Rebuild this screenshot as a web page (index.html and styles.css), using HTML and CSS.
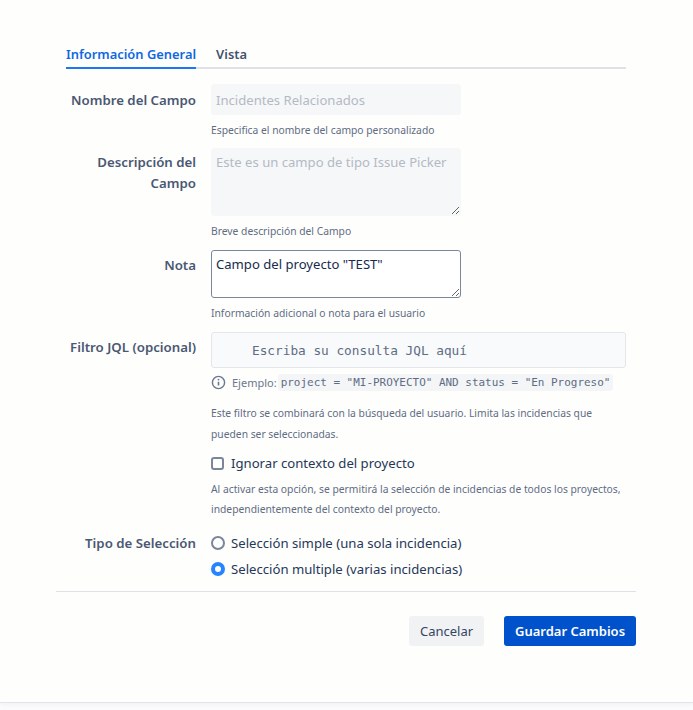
FILE: index.html
```html
<!DOCTYPE html>
<html lang="es">
<head>
<meta charset="utf-8">
<title>Campo</title>
<link rel="stylesheet" href="styles.css">
</head>
<body>
<main class="panel">
  <div class="body">
    <nav class="tabs">
      <a class="tab active">Información General</a>
      <a class="tab">Vista</a>
    </nav>
    <form class="form">
      <div class="row row-name">
        <label class="label">Nombre del Campo</label>
        <div class="field">
          <input class="input disabled" placeholder="Incidentes Relacionados" disabled>
          <p class="help help-first">Especifica el nombre del campo personalizado</p>
        </div>
      </div>
      <div class="row row-desc">
        <label class="label">Descripción del Campo</label>
        <div class="field">
          <textarea class="area area-desc disabled" placeholder="Este es un campo de tipo Issue Picker"></textarea>
          <p class="help help-first">Breve descripción del Campo</p>
        </div>
      </div>
      <div class="row row-note">
        <label class="label">Nota</label>
        <div class="field">
          <textarea class="area area-note">Campo del proyecto "TEST"</textarea>
          <p class="help help-first">Información adicional o nota para el usuario</p>
        </div>
      </div>
      <div class="row row-jql">
        <label class="label">Filtro JQL (opcional)</label>
        <div class="field field-wide">
          <div class="jql">Escriba su consulta JQL aquí</div>
          <div class="example">
            <svg class="info" width="16" height="16" viewBox="0 0 16 16" fill="none" stroke="#6b778c">
              <circle cx="8" cy="8" r="6.5" stroke-width="1.5"/>
              <path d="M8 7.2v4" stroke-width="1.7"/>
              <circle cx="8" cy="4.9" r="1" fill="#6b778c" stroke="none"/>
            </svg>
            <span class="example-text">Ejemplo:</span>
            <code class="code">project = "MI-PROYECTO" AND status = "En Progreso"</code>
          </div>
          <p class="help help-long help-jql">Este filtro se combinará con la búsqueda del usuario. Limita las incidencias que pueden ser seleccionadas.</p>
          <label class="check">
            <span class="box"></span>
            <span>Ignorar contexto del proyecto</span>
          </label>
          <p class="help help-long help-check">Al activar esta opción, se permitirá la selección de incidencias de todos los proyectos, independientemente del contexto del proyecto.</p>
        </div>
      </div>
      <div class="row row-type">
        <label class="label">Tipo de Selección</label>
        <div class="field field-wide">
          <label class="radio"><span class="dot"></span><span>Selección simple (una sola incidencia)</span></label>
          <label class="radio"><span class="dot dot-on"></span><span>Selección multiple (varias incidencias)</span></label>
        </div>
      </div>
    </form>
  </div>
  <footer class="footer">
    <button type="button" class="btn btn-plain">Cancelar</button>
    <button type="button" class="btn btn-primary">Guardar Cambios</button>
  </footer>
</main>
</body>
</html>
```
FILE: styles.css
```css
* { box-sizing: border-box; }
html, body { margin: 0; padding: 0; }
body {
  background: #fbfbfd;
  font-family: "Noto Sans", "Open Sans", sans-serif;
  color: #172b4d;
  height: 710px;
  overflow: hidden;
}
.panel {
  background: #fefefd;
  height: 703px;
  padding-top: 45px;
  border-bottom: 1px solid #e2e4ec;
  box-shadow: 0 2px 4px rgba(9, 30, 66, 0.04);
}
.body { padding: 0 67px 0 66px; }
.tabs {
  display: flex;
  gap: 20px;
  border-bottom: 2px solid #dfe1e6;
  height: 24px;
}
.tab {
  font-size: 12.9px;
  font-weight: 600;
  line-height: 18px;
  color: #42526e;
  height: 24px;
  white-space: nowrap;
}
.tab.active {
  color: #1068e0;
  border-bottom: 2px solid #1a78f5;
}
.form { padding-top: 15px; }
.row { display: flex; gap: 15px; }
.label {
  width: 130px;
  flex: none;
  text-align: right;
  font-size: 13.25px;
  font-weight: 600;
  line-height: 21px;
  color: #4a5872;
}
.field { width: 250px; flex: none; }
.field-wide { width: 415px; }
.row-name .label { padding-top: 6px; }
.row-desc { margin-top: 11px; }
.row-desc .label { padding-top: 4px; }
.row-note { margin-top: 12px; }
.row-note .label { padding-top: 5px; }
.row-jql { margin-top: 12px; }
.row-jql .label { padding-top: 5px; }
.row-type { margin-top: 11px; }
.row-type .label { padding-top: 3px; }
.input, .area {
  display: block;
  width: 250px;
  font-family: inherit;
  font-size: 13.1px;
  color: #172b4d;
  border-radius: 3px;
  outline: none;
}
.input {
  height: 31px;
  border: 0;
  padding: 0 5px;
}
.area {
  padding: 3px 4px;
  line-height: 20px;
  border: 1px solid #7a869a;
}
.disabled {
  background: #f6f7f8;
  border-color: #f6f7f8;
}
.disabled::placeholder { color: #b3bac5; opacity: 1; }
.area-desc { height: 68px; padding-left: 4px; }
.area-note { height: 48px; background: #fff; }
.help {
  margin: 0;
  font-size: 10.3px;
  color: #5e6c84;
  white-space: nowrap;
}
.help-first { line-height: 14px; margin-top: 8px; }
.help-long { line-height: 20px; white-space: normal; }
.jql {
  height: 36px;
  width: 415px;
  border: 1px solid #e4e6ea;
  border-radius: 3px;
  background: #f9fafb;
  font-family: "DejaVu Sans Mono", monospace;
  font-size: 12.75px;
  line-height: 35px;
  padding-left: 40px;
  color: #5e6c84;
}
.example {
  display: flex;
  align-items: center;
  margin-top: 5px;
  height: 18px;
  font-size: 11px;
  color: #6b778c;
}
.info { flex: none; margin-right: 6px; width: 15px; height: 15px; }
.example-text { margin-right: 1px; }
.code {
  font-family: "DejaVu Sans Mono", monospace;
  font-size: 10.96px;
  line-height: 17px;
  color: #5e6c84;
  background: #f4f5f7;
  border-radius: 3px;
  padding: 0 3px;
  white-space: nowrap;
}
.help-jql { margin-top: 12px; line-height: 21px; }
.check, .radio {
  display: flex;
  align-items: center;
  font-size: 13.15px;
  line-height: 20px;
  color: #253858;
  white-space: nowrap;
}
.check { gap: 7px; margin-top: 8px; }
.box {
  width: 13px;
  height: 13px;
  border: 2px solid #7a869a;
  border-radius: 3px;
  background: #fff;
  flex: none;
}
.help-check { margin-top: 6px; }
.radio { gap: 6px; height: 26px; }
.dot {
  width: 14px;
  height: 14px;
  border: 2px solid #7a869a;
  border-radius: 50%;
  flex: none;
  background: #fff;
}
.dot-on { border: 4.5px solid #2684ff; }
.footer {
  margin: 9px 57px 0 56px;
  border-top: 1px solid #dfe1e6;
  padding-top: 24px;
  display: flex;
  justify-content: flex-end;
  gap: 20px;
}
.btn {
  height: 30px;
  border: 0;
  border-radius: 3px;
  font-family: inherit;
  font-size: 13px;
  padding: 0;
}
.btn-plain { width: 75px; background: #f1f2f4; color: #344563; }
.btn-primary { width: 132px; background: #0052cc; color: #fff; font-weight: 600; }
```
